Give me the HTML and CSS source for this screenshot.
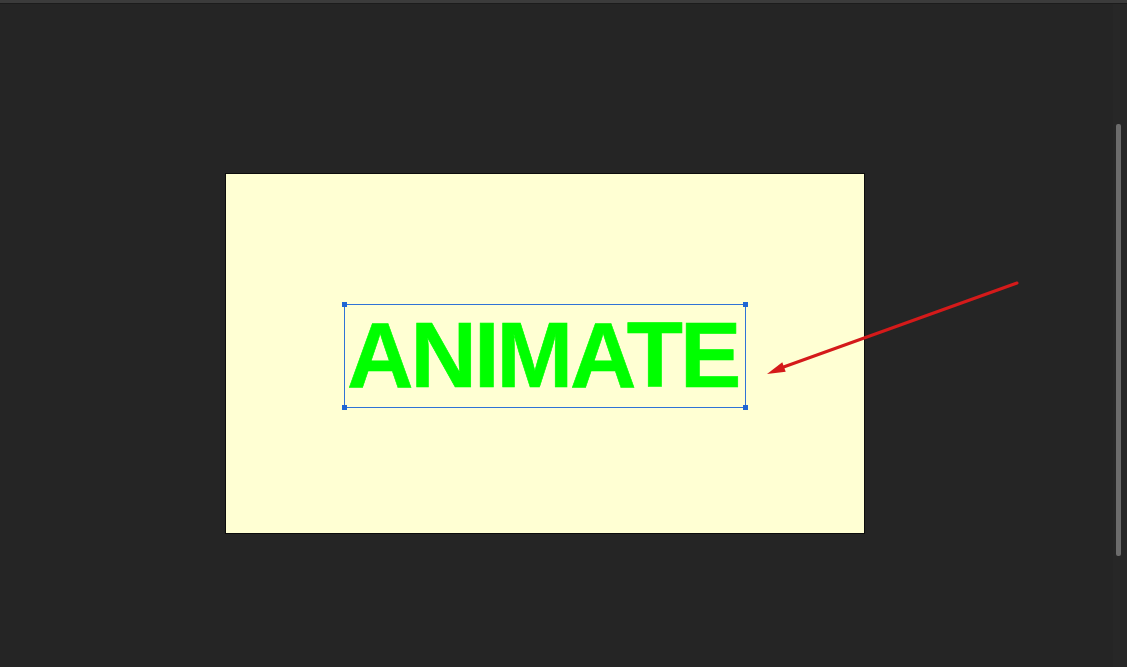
FILE: index.html
```html
<!DOCTYPE html>
<html>
<head>
<meta charset="utf-8">
<link rel="stylesheet" href="styles.css">
</head>
<body>
<div class="topbar"></div>
<div class="main">
  <div class="workspace">
    <div class="canvas">
      <div class="selection">
        <span class="word">ANIMATE</span>
        <i class="handle tl"></i>
        <i class="handle tr"></i>
        <i class="handle bl"></i>
        <i class="handle br"></i>
      </div>
    </div>
  </div>
  <div class="track"><div class="thumb"></div></div>
</div>
<svg class="arrow" width="1127" height="667" viewBox="0 0 1127 667">
  <line x1="1017" y1="283" x2="778" y2="369" stroke="#d41a1a" stroke-width="3" stroke-linecap="round"/>
  <polygon points="767,374 782.3,362.3 785.7,371.7" fill="#d41a1a"/>
</svg>
</body>
</html>
```
FILE: styles.css
```css
html, body {
  margin: 0;
  padding: 0;
}
body {
  width: 1127px;
  height: 667px;
  overflow: hidden;
  background: #252525;
  position: relative;
  font-family: "Liberation Sans", Arial, sans-serif;
}
.topbar {
  height: 3px;
  background: #3b3b3b;
  border-bottom: 1px solid #1c1c1c;
}
.main {
  display: flex;
  height: 663px;
}
.workspace {
  flex: 1;
  padding-top: 169px;
  padding-left: 225px;
  box-sizing: border-box;
}
.canvas {
  width: 640px;
  height: 361px;
  box-sizing: border-box;
  border: 1px solid #0c0c0c;
  background: #ffffd3;
  padding-top: 130px;
  padding-left: 118px;
}
.selection {
  position: relative;
  width: 402px;
  height: 104px;
  box-sizing: border-box;
  border: 1px solid #2f73d6;
  padding-top: 4px;
  padding-left: 2px;
}
.word {
  display: block;
  font-family: "Liberation Sans", Arial, sans-serif;
  font-weight: bold;
  font-size: 92px;
  line-height: 92px;
  letter-spacing: -3px;
  color: #00ff00;
  white-space: nowrap;
  -webkit-text-stroke: 0.6px #00ff00;
}
.handle {
  position: absolute;
  width: 5px;
  height: 5px;
  background: #1f66d4;
}
.handle.tl { left: -3px; top: -3px; }
.handle.tr { right: -3px; top: -3px; }
.handle.bl { left: -3px; bottom: -3px; }
.handle.br { right: -3px; bottom: -3px; }
.track {
  width: 14px;
  background: #272727;
  padding-top: 120px;
  box-sizing: border-box;
}
.thumb {
  margin-left: 3px;
  width: 5px;
  height: 432px;
  background: #6c6c6c;
  border-radius: 2px;
}
.arrow {
  position: absolute;
  left: 0;
  top: 0;
  pointer-events: none;
}
```
